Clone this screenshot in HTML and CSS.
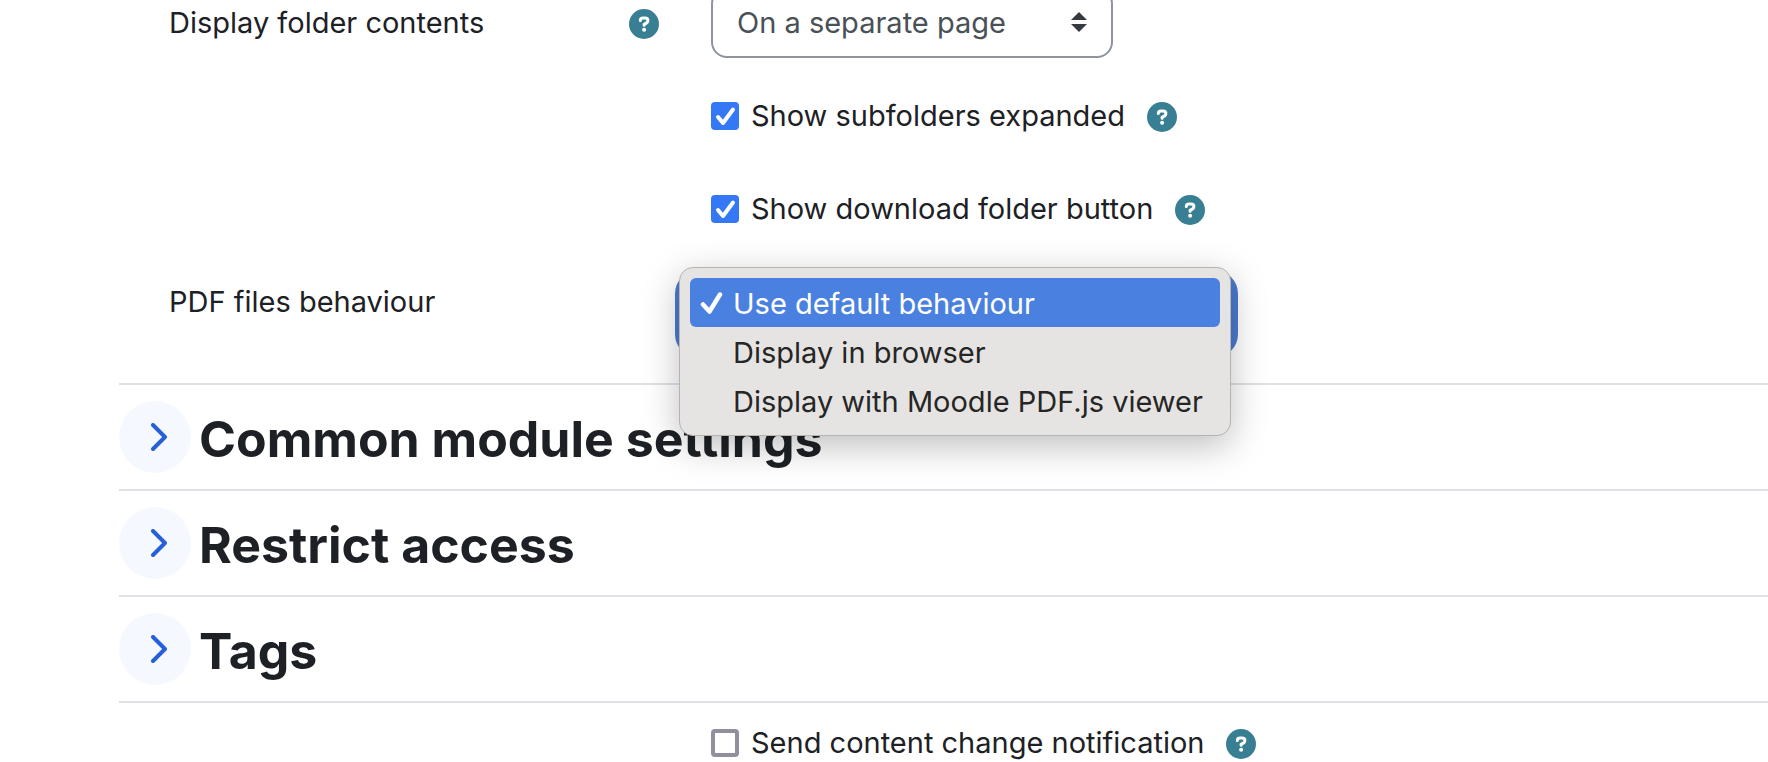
FILE: index.html
```html
<!DOCTYPE html>
<html lang="en">
<head>
    <meta charset="utf-8">
    <title>Folder settings</title>
    <link rel="stylesheet" href="styles.css">
</head>
<body>
    <!-- Shared icons -->
    <svg class="sprite" aria-hidden="true">
        <symbol id="icon-help" viewBox="0 0 30 30">
            <circle cx="15" cy="15" r="15" fill="#397f93"/>
            <path d="M11.3 11.4c0-1.500 1.200-2.500 2.900-2.500h1.700c1.800 0 3 1.100 3 2.700 0 1.100-.6 1.900-1.600 2.500l-2.200 1.300v.9" fill="none" stroke="#fff" stroke-width="3" stroke-linecap="round" stroke-linejoin="round"/>
            <circle cx="15.100" cy="20.700" r="2" fill="#fff"/>
        </symbol>
        <symbol id="icon-chevron" viewBox="0 0 16 28">
            <path d="M2 2l12 12L2 26" fill="none" stroke="#2560d7" stroke-width="4" stroke-linecap="round" stroke-linejoin="round"/>
        </symbol>
    </svg>

    <form class="settings">
        <div class="row">
            <div class="row-label">
                <label for="display">Display folder contents</label>
                <button type="button" class="help" aria-label="Help"><svg><use href="#icon-help"/></svg></button>
            </div>
            <div class="select-wrap">
                <select id="display" class="select">
                    <option>On a separate page</option>
                    <option>Inline on a course page</option>
                </select>
                <svg class="select-arrows" viewBox="0 0 16 20" aria-hidden="true">
                    <path d="M8 0l8 8H0zM8 20l8-8H0z" fill="#343a40"/>
                </svg>
            </div>
        </div>

        <div class="row">
            <div class="check">
                <input type="checkbox" id="expanded" checked>
                <label for="expanded">Show subfolders expanded</label>
                <button type="button" class="help" aria-label="Help"><svg><use href="#icon-help"/></svg></button>
            </div>
        </div>

        <div class="row">
            <div class="check">
                <input type="checkbox" id="download" checked>
                <label for="download">Show download folder button</label>
                <button type="button" class="help" aria-label="Help"><svg><use href="#icon-help"/></svg></button>
            </div>
        </div>

        <div class="row row-open">
            <div class="row-label">
                <label for="pdf">PDF files behaviour</label>
            </div>
            <div class="select-open">
                <select id="pdf" class="select-focus">
                    <option></option>
                </select>
                <ul class="menu" role="listbox" aria-label="PDF files behaviour">
                    <li class="menu-item active" role="option" aria-selected="true">
                        <svg class="tick" viewBox="0 0 24 24" aria-hidden="true">
                            <path d="M3 13.500L9.500 20.500 20 3.500" fill="none" stroke="#fff" stroke-width="4.500" stroke-linecap="round" stroke-linejoin="round"/>
                        </svg>
                        Use default behaviour
                    </li>
                    <li class="menu-item" role="option">Display in browser</li>
                    <li class="menu-item" role="option">Display with Moodle PDF.js viewer</li>
                </ul>
            </div>
        </div>

        <section class="section">
            <button type="button" class="toggle" aria-label="Expand Common module settings"><svg><use href="#icon-chevron"/></svg></button>
            <h3>Common module settings</h3>
        </section>
        <section class="section">
            <button type="button" class="toggle" aria-label="Expand Restrict access"><svg><use href="#icon-chevron"/></svg></button>
            <h3>Restrict access</h3>
        </section>
        <section class="section">
            <button type="button" class="toggle" aria-label="Expand Tags"><svg><use href="#icon-chevron"/></svg></button>
            <h3>Tags</h3>
        </section>

        <div class="row row-last">
            <div class="check">
                <input type="checkbox" id="notify">
                <label for="notify">Send content change notification</label>
                <button type="button" class="help" aria-label="Help"><svg><use href="#icon-help"/></svg></button>
            </div>
        </div>
    </form>
</body>
</html>
```

FILE: styles.css
```css
* {
    box-sizing: border-box;
}
body {
    margin: 0;
    background: #fff;
    color: #1d2125;
    font-family: Inter, "Liberation Sans", sans-serif;
    font-size: 29px;
    line-height: 40px;
    overflow: hidden;
}
.sprite {
    position: absolute;
    width: 0;
    height: 0;
}

/* The form is scrolled, so the first row starts above the window */
.settings {
    margin-top: -12px;
    padding-left: 119px;
}
.row {
    display: grid;
    grid-template-columns: 490px 1fr;
    column-gap: 52px;
    align-items: center;
    height: 70px;
    margin-bottom: 23px;
    padding-left: 50px;
}
.row-label {
    display: flex;
    align-items: center;
    justify-content: space-between;
    height: 70px;
}
.row-open {
    align-items: start;
}
.row-last {
    margin: 5px 0 0;
}
.help {
    width: 30px;
    height: 30px;
    margin-top: 2px;
    padding: 0;
    border: 0;
    background: none;
}
.help svg {
    display: block;
    width: 30px;
    height: 30px;
}

/* Selects */
.select-wrap {
    position: relative;
    width: 402px;
}
.select {
    display: block;
    appearance: none;
    width: 100%;
    height: 70px;
    padding: 0 24px;
    border: 2px solid #8f959e;
    border-radius: 16px;
    background: #fff;
    color: #495057;
    font: inherit;
}
.select-arrows {
    position: absolute;
    top: 24px;
    right: 26px;
    width: 16px;
    height: 20px;
}
.select-open {
    position: relative;
    width: 563px;
    margin-left: -36px;
    padding-top: 3px;
}
.select-focus {
    display: block;
    appearance: none;
    width: 100%;
    height: 88px;
    border: 8px solid #4a7bd0;
    border-radius: 24px;
    background: #fff;
}
.menu {
    position: absolute;
    top: 0;
    left: 4px;
    z-index: 1;
    width: 552px;
    margin: 0;
    padding: 10px;
    border: 1px solid #b5b4b3;
    border-radius: 14px;
    background: #e5e4e2;
    box-shadow: 0 10px 36px rgba(0, 0, 0, 0.26);
    color: #262626;
    list-style: none;
}
.menu-item {
    position: relative;
    padding: 2px 0 0 43px;
    border-radius: 6px;
    line-height: 47px;
    white-space: nowrap;
}
.menu-item.active {
    background: #4a81e0;
    color: #fff;
}
.tick {
    position: absolute;
    top: 13px;
    left: 10px;
    width: 24px;
    height: 24px;
}

/* Checkboxes */
.check {
    display: flex;
    grid-column: 2;
    align-items: center;
}
.check input {
    appearance: none;
    width: 28px;
    height: 28px;
    margin: 0 12px 0 0;
    border: 4px solid #8f8f9d;
    border-radius: 4px;
    background: #fff;
}
.check input:checked {
    border: 0;
    background: #3478f6 url("data:image/svg+xml,%3Csvg xmlns='http://www.w3.org/2000/svg' viewBox='0 0 28 28'%3E%3Cpath d='M7 15l5 6L22 7.500' fill='none' stroke='%23fff' stroke-width='4' stroke-linecap='round' stroke-linejoin='round'/%3E%3C/svg%3E");
}
.check .help {
    margin-left: 22px;
}

/* Collapsed sections */
.section {
    display: flex;
    align-items: center;
    gap: 8px;
    height: 106px;
    border-top: 2px solid #dee2e6;
}
.section:last-of-type {
    height: 108px;
    border-bottom: 2px solid #dee2e6;
}
.row + .section {
    margin-top: 46px;
}
.section h3 {
    margin: 0;
    padding-top: 4px;
    font-size: 50px;
    font-weight: 700;
    line-height: 60px;
}
.toggle {
    display: flex;
    align-items: center;
    justify-content: center;
    width: 72px;
    height: 72px;
    padding: 0 0 0 8px;
    border: 0;
    border-radius: 50%;
    background: #f5f9ff;
}
.toggle svg {
    width: 16px;
    height: 28px;
}
```
